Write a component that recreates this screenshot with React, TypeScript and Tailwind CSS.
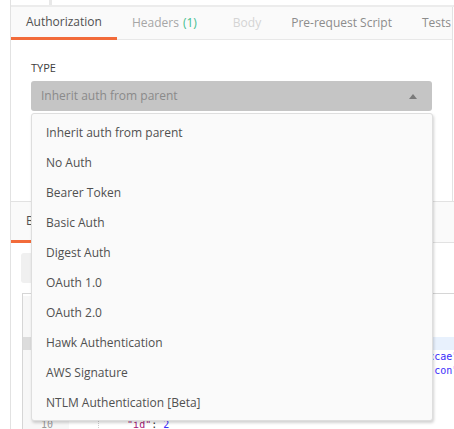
import React from "react";

const authTypes = [
  "Inherit auth from parent",
  "No Auth",
  "Bearer Token",
  "Basic Auth",
  "Digest Auth",
  "OAuth 1.0",
  "OAuth 2.0",
  "Hawk Authentication",
  "AWS Signature",
  "NTLM Authentication [Beta]",
];

function CodeLine({ n, highlight, children }: { n: number; highlight?: boolean; children?: React.ReactNode }) {
  return (
    <div className={`flex h-[13.6px] items-center ${highlight ? "bg-[#e8f1fd]" : ""}`}>
      <div
        className={`w-[46px] shrink-0 h-full pr-[16px] text-right text-[10px] leading-[13.6px] text-[#999] ${
          highlight ? "bg-[#dcdcdc]" : "bg-[#f7f7f7]"
        }`}
      >
        {n}
      </div>
      <div className="w-[30px] h-full shrink-0 border-r border-dotted border-[#ccc]" />
      <div className="pl-[4px] whitespace-pre text-[10px] leading-[13.6px] text-[#333]">{children}</div>
    </div>
  );
}

export default function App() {
  return (
    <div
      className="relative w-[454px] h-[429px] overflow-hidden bg-white pl-[10px]"
      style={{ fontFamily: '"Open Sans", sans-serif' }}
    >
      <div className="h-full border-l border-[#e2e2e2]">
        {/* previous pane strip */}
        <div className="flex h-[5px]">
          <div className="w-[38px] bg-white" />
          <div className="w-[3px] bg-[#e8e8e8]" />
        </div>
        <div className="h-[2px] bg-[#ececec]" />

        {/* request panel */}
        <div className="h-[194px] border-r border-[#e2e2e2] mr-[1px]">
          <div className="flex h-[33px] items-stretch whitespace-nowrap border-b border-[#e8e8e8] bg-[#fafafa] text-[12px]">
            <div className="flex items-center px-[15px] border-b-[3px] border-[#f26b3a] text-[#505050] -mb-px">
              Authorization
            </div>
            <div className="flex items-center pl-[15px] text-[#a6a6a6]">
              Headers <span className="ml-[4px] text-[#45be8f]">(1)</span>
            </div>
            <div className="flex items-center pl-[36px] text-[#d4d4d4]">Body</div>
            <div className="flex items-center pl-[30px] text-[#8c8c8c]">Pre-request Script</div>
            <div className="flex items-center pl-[30px] text-[#8c8c8c]">Tests</div>
          </div>
          <div className="pl-[20px] pt-[20px]">
            <div className="text-[11px] leading-[16px] text-[#404040]">TYPE</div>
            <div className="mt-[5px] flex h-[30px] w-[401px] items-center justify-between rounded-[3px] bg-[#c5c5c5] pl-[10px] pr-[15px] text-[12px] text-[#8a8a8a]">
              <span>Inherit auth from parent</span>
              <svg width="8" height="5" viewBox="0 0 8 5">
                <path d="M0 5 L4 0 L8 5 Z" fill="#7a7a7a" />
              </svg>
            </div>
          </div>
        </div>

        {/* response panel */}
        <div className="border-t border-[#e2e2e2]">
          <div className="flex h-[41px] border-b border-[#e2e2e2] bg-[#fafafa] text-[12px]">
            <div className="flex items-center px-[15px] border-b-[3px] border-[#f26b3a] text-[#505050] -mb-px">
              Body
            </div>
          </div>
          <div className="h-[50px] pl-[10px] pt-[10px]">
            <div className="h-[30px] w-[120px] rounded-[3px] bg-[#f0f0f0]" />
          </div>
          <div
            className="ml-[11px] border-l border-t border-[#d6d6d6] pt-[2px]"
            style={{ fontFamily: '"DejaVu Sans Mono", monospace' }}
          >
            <CodeLine n={1}>{"{"}</CodeLine>
            <CodeLine n={2}>
              {"  "}
              <span className="text-[#a31574]">"args"</span>: {"{}"},
            </CodeLine>
            <CodeLine n={3}>
              {"  "}
              <span className="text-[#a31574]">"data"</span>: <span className="text-[#3a2dfa]">""</span>,
            </CodeLine>
            <CodeLine n={4} highlight>
              {"  "}
              <span className="text-[#a31574]">"files"</span>: {"{}"},
            </CodeLine>
            <CodeLine n={5}>
              {"    "}
              <span className="text-[#a31574]">"token"</span>:{" "}
              <span className="text-[#3a2dfa]">"58f3b7e9d2a41f0cb6a2dd90b1e77f0a4d3b9e16ccae"</span>
            </CodeLine>
            <CodeLine n={6}>
              {"    "}
              <span className="text-[#a31574]">"type"</span>:{" "}
              <span className="text-[#3a2dfa]">"application/vnd.api+json; charset=utf-8;  con"</span>
            </CodeLine>
            <CodeLine n={7}>{"  },"}</CodeLine>
            <CodeLine n={8}>
              {"  "}
              <span className="text-[#a31574]">"json"</span>: {"{"}
            </CodeLine>
            <CodeLine n={9}>{"  "}</CodeLine>
            <CodeLine n={10}>
              {"    "}
              <span className="text-[#a31574]">"id"</span>: <span className="text-[#3a2dfa]">2</span>
            </CodeLine>
          </div>
        </div>
      </div>

      {/* auth type dropdown */}
      <div className="absolute left-[31px] top-[113px] w-[402px] h-[308px] rounded-[3px] border border-[#dedede] bg-[#fafafa] pt-[4px] shadow-[1px_2px_3px_rgba(0,0,0,0.18)]">
        {authTypes.map((t) => (
          <div key={t} className="flex h-[30px] items-center px-[14px] text-[12px] text-[#505050]">
            {t}
          </div>
        ))}
      </div>
    </div>
  );
}
